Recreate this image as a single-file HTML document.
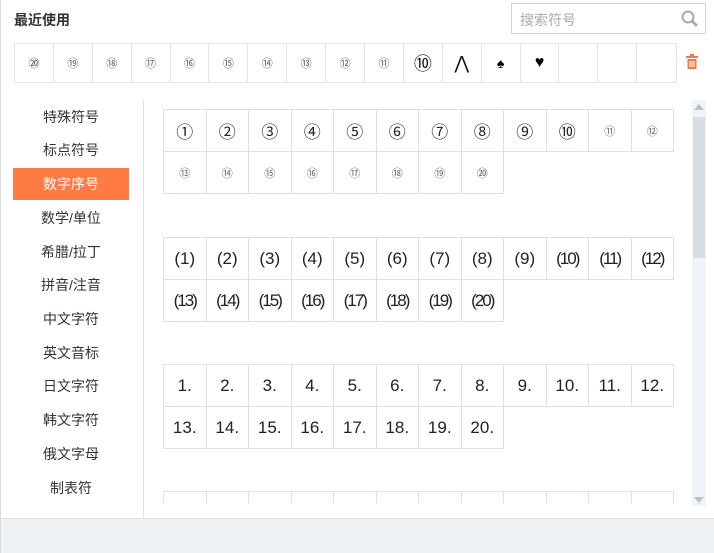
<!DOCTYPE html>
<html><head><meta charset="utf-8"><style>
*{margin:0;padding:0;box-sizing:border-box}
body{width:714px;height:553px;background:#fff;font-family:"Liberation Sans","Noto Sans CJK SC",sans-serif;position:relative;overflow:hidden;color:#333}
.a{position:absolute}
.title{left:14px;top:10px;font-size:14px;font-weight:bold;color:#333}
.search{left:511px;top:3px;width:195px;height:31px;border:1px solid #cfd4d9;font-size:14px;color:#aaa;padding:6px 0 0 8px}
.recent{left:14px;top:43px;display:flex;border:1px solid #e3e6e9}
.recent div{width:38.9px;height:38px;border-right:1px solid #e3e6e9;display:flex;align-items:center;justify-content:center;font-size:11px;color:#555}
.recent div:last-child{border-right:none}
.nav{left:13px;width:116px;text-align:center;font-size:14px;color:#333;height:32px;line-height:32px}
.nav.on{background:#ff7b45;color:#fff}
.div{left:143px;top:100px;width:1px;height:418px;background:#dde3ea}
.grid{left:163px;display:grid;grid-template-columns:repeat(12,42.5px);grid-auto-rows:42px}
.grid div{border:1px solid #dbe1e7;margin:0 -1px -1px 0;display:flex;align-items:center;justify-content:center;font-size:17px;color:#222}
.grid .s{font-size:11px;color:#666}
.footer{left:0;top:518px;width:714px;height:35px;background:#eef1f4;border-top:1px solid #dde2e7}
</style></head><body>
<div class="a title">最近使用</div>
<div class="a search">搜索符号
<svg class="a" style="right:6px;top:6px" width="18" height="18" viewBox="0 0 18 18"><circle cx="7" cy="7" r="5.5" fill="none" stroke="#aaa" stroke-width="2"/><path d="M11 11l5 5" stroke="#aaa" stroke-width="3"/></svg></div>
<div class="a recent">
<div>⑳</div><div>⑲</div><div>⑱</div><div>⑰</div><div>⑯</div><div>⑮</div><div>⑭</div><div>⑬</div><div>⑫</div><div>⑪</div><div style="font-size:18px;color:#111">⑩</div><div style="font-size:18px;color:#111">⋀</div><div style="font-size:14px;color:#000">♠</div><div style="font-size:16px;color:#000">♥</div><div></div><div></div><div></div>
</div>
<svg class="a" style="left:686px;top:54px" width="12" height="15" viewBox="0 0 12 15"><rect x="0" y="2" width="12" height="2" fill="#f07b4a"/><rect x="4" y="0" width="4" height="2" fill="#f07b4a"/><path d="M1.5 5h9v10h-9z" fill="#f07b4a"/><path d="M4 7v6M6 7v6M8 7v6" stroke="#fff" stroke-width="1"/></svg>

<div class="a nav" style="top:101px">特殊符号</div>
<div class="a nav" style="top:134px">标点符号</div>
<div class="a nav on" style="top:168px">数字序号</div>
<div class="a nav" style="top:202px">数学/单位</div>
<div class="a nav" style="top:236px">希腊/拉丁</div>
<div class="a nav" style="top:269px">拼音/注音</div>
<div class="a nav" style="top:303px">中文字符</div>
<div class="a nav" style="top:337px">英文音标</div>
<div class="a nav" style="top:370px">日文字符</div>
<div class="a nav" style="top:404px">韩文字符</div>
<div class="a nav" style="top:438px">俄文字母</div>
<div class="a nav" style="top:472px">制表符</div>
<div class="a div"></div>

<div class="a grid" style="top:109px">
<div>①</div><div>②</div><div>③</div><div>④</div><div>⑤</div><div>⑥</div><div>⑦</div><div>⑧</div><div>⑨</div><div>⑩</div><div class="s">⑪</div><div class="s">⑫</div>
<div class="s">⑬</div><div class="s">⑭</div><div class="s">⑮</div><div class="s">⑯</div><div class="s">⑰</div><div class="s">⑱</div><div class="s">⑲</div><div class="s">⑳</div>
</div>
<div class="a grid" style="top:237px;font-size:16px">
<div>(1)</div><div>(2)</div><div>(3)</div><div>(4)</div><div>(5)</div><div>(6)</div><div>(7)</div><div>(8)</div><div>(9)</div><div style="letter-spacing:-2px">(10)</div><div style="letter-spacing:-2px">(11)</div><div style="letter-spacing:-2px">(12)</div>
<div style="letter-spacing:-2px">(13)</div><div style="letter-spacing:-2px">(14)</div><div style="letter-spacing:-2px">(15)</div><div style="letter-spacing:-2px">(16)</div><div style="letter-spacing:-2px">(17)</div><div style="letter-spacing:-2px">(18)</div><div style="letter-spacing:-2px">(19)</div><div style="letter-spacing:-2px">(20)</div>
</div>
<div class="a grid" style="top:364px">
<div>1.</div><div>2.</div><div>3.</div><div>4.</div><div>5.</div><div>6.</div><div>7.</div><div>8.</div><div>9.</div><div>10.</div><div>11.</div><div>12.</div>
<div>13.</div><div>14.</div><div>15.</div><div>16.</div><div>17.</div><div>18.</div><div>19.</div><div>20.</div>
</div>
<div class="a" style="left:160px;top:490px;width:520px;height:13px;overflow:hidden">
<div class="a grid" style="left:3px;top:1px"><div></div><div></div><div></div><div></div><div></div><div></div><div></div><div></div><div></div><div></div><div></div><div></div></div>
</div>

<div class="a" style="left:692px;top:100px;width:14px;height:406px;background:#f1f4f7"></div>
<div class="a" style="left:693px;top:117px;width:12px;height:141px;background:#d7dde3"></div>
<div class="a" style="left:694px;top:104px;width:0;height:0;border-left:5px solid transparent;border-right:5px solid transparent;border-bottom:6px solid #b9c1c9"></div>
<div class="a" style="left:694px;top:497px;width:0;height:0;border-left:5px solid transparent;border-right:5px solid transparent;border-top:6px solid #b9c1c9"></div>
<div class="a footer"></div>
<div class="a" style="left:0;top:0;width:1px;height:553px;background:#d5dadf"></div>
</body></html>
